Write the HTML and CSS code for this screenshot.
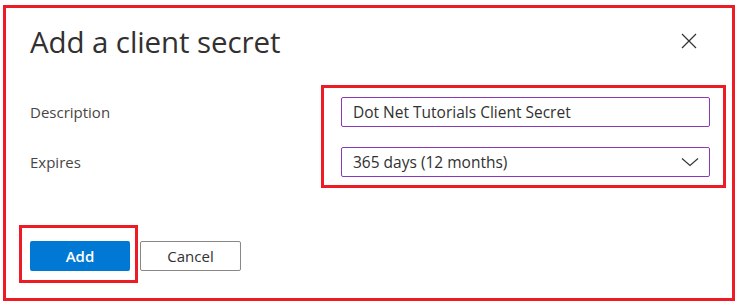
FILE: index.html
```html
<!DOCTYPE html>
<html>
<head>
<meta charset="utf-8">
<link rel="stylesheet" href="styles.css">
</head>
<body>
<div class="frame">
  <div class="header">
    <h1 class="title">Add a client secret</h1>
    <button class="close" aria-label="Close">
      <svg width="16" height="16" viewBox="0 0 16 16"><path d="M1 1 L15 15 M15 1 L1 15" stroke="#323130" stroke-width="1.2" fill="none"/></svg>
    </button>
  </div>
  <div class="form">
    <div class="labels">
      <div class="label">Description</div>
      <div class="label">Expires</div>
    </div>
    <div class="fields highlight">
      <div class="input">Dot Net Tutorials Client Secret</div>
      <div class="input select">
        <span>365 days (12 months)</span>
        <svg class="chev" width="18" height="10" viewBox="0 0 18 10"><path d="M1 1.5 L9 8.5 L17 1.5" stroke="#323130" stroke-width="1.1" fill="none"/></svg>
      </div>
    </div>
  </div>
  <div class="actions">
    <div class="highlight add-wrap"><button class="btn primary">Add</button></div>
    <button class="btn secondary">Cancel</button>
  </div>
</div>
</body>
</html>
```
FILE: styles.css
```css
html, body { margin: 0; padding: 0; background: #fff; }
body { font-family: "Open Sans", "Noto Sans", sans-serif; color: #323130; }
.frame {
  margin: 5px 3px 4px 3px;
  border: 3px solid #ed1c24;
  box-sizing: border-box;
  height: 296px;
  display: flex;
  flex-direction: column;
}
.header {
  display: flex;
  justify-content: space-between;
  align-items: flex-start;
  padding: 14px 35px 0 24px;
}
.title {
  margin: 0;
  font-size: 29.5px;
  font-weight: 400;
  line-height: 40px;
  color: #323130;
  letter-spacing: -0.1px;
}
.close {
  border: 0; background: none; padding: 0; margin-top: 11px;
  width: 16px; height: 16px; display: block;
}
.close svg { display: block; }
.form {
  display: flex;
  margin-top: 23px;
  padding-left: 24px;
}
.labels {
  width: 291px;
  display: flex;
  flex-direction: column;
  gap: 20px;
  padding-top: 12px;
}
.label {
  height: 30px;
  line-height: 30px;
  font-size: 15px;
  color: #484644;
}
.highlight { border: 3px solid #ed1c24; }
.fields {
  width: 405px;
  box-sizing: border-box;
  padding: 9px 13px 8px 17px;
  display: flex;
  flex-direction: column;
  gap: 20px;
}
.input {
  height: 30px;
  box-sizing: border-box;
  border: 1px solid #8a3ab9;
  border-radius: 2px;
  padding: 0 11px;
  font-size: 15.5px;
  line-height: 28px;
  color: #323130;
  white-space: nowrap;
}
.select {
  display: flex;
  justify-content: space-between;
  align-items: center;
  padding-right: 10px;
}
.chev { display: block; }
.actions {
  display: flex;
  align-items: flex-start;
  margin-top: 37px;
  padding-left: 13px;
}
.add-wrap {
  padding: 13px 5px 9px 8px;
}
.btn {
  width: 100px;
  height: 30px;
  box-sizing: border-box;
  border-radius: 2px;
  font-family: "Open Sans", "Noto Sans", sans-serif;
  font-size: 15px;
  font-weight: 600;
  padding: 0;
  display: block;
}
.primary { background: #0078d4; color: #fff; border: 0; }
.secondary {
  background: #fff; color: #323130; border: 1px solid #8a8886;
  margin-left: 2px; margin-top: 16px; width: 101px;
  font-weight: 400;
}
```
